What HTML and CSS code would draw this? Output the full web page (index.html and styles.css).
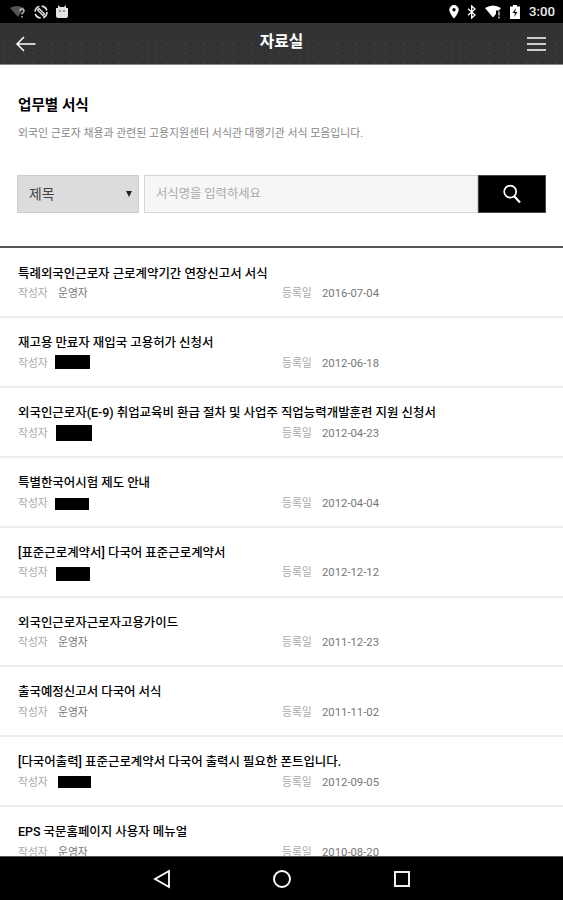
FILE: index.html
```html
<!DOCTYPE html>
<html lang="ko">
<head>
    <meta charset="UTF-8">
    <meta name="viewport" content="width=device-width, initial-scale=1.0">
    <title>자료실</title>
    <link rel="stylesheet" href="styles.css">
</head>
<body>
    <div class="status-bar">
        <div class="status-left">
            <svg width="16" height="14" viewBox="0 0 16 14">
                <path d="M0 3Q7-1 14 3L8 12Z" fill="#555"/>
                <path d="M10 6q0-2 2-2t2 2q0 1-2 2.500v1M12 11v1.500" fill="none" stroke="#bbb" stroke-width="1.500"/>
            </svg>
            <svg width="14" height="14" viewBox="0 0 14 14" fill="none" stroke="#ddd">
                <circle cx="7" cy="7" r="6" stroke-width="1.700" stroke-dasharray="7 2.400"/>
                <path d="M5 3.500L10.500 9 9 10.500 3.500 5z" stroke-width="1.500"/>
            </svg>
            <svg width="12" height="14" viewBox="0 0 12 14">
                <path d="M2 0l2 2h4l2-2v3h2v8q0 2-2 2H2q-2 0-2-2V3h2z" fill="#e4e4e4"/>
                <circle cx="4" cy="6" r=".8" fill="#333"/>
                <circle cx="8" cy="6" r=".8" fill="#333"/>
            </svg>
        </div>
        <div class="status-right">
            <svg width="10" height="14" viewBox="0 0 10 14">
                <path fill="#fff" fill-rule="evenodd" d="M5 0a4.700 4.700 0 0 0-4.700 4.700C.3 8.200 5 13.500 5 13.500s4.700-5.300 4.700-8.800A4.700 4.700 0 0 0 5 0zm0 3a1.700 1.700 0 1 1 0 3.400A1.700 1.700 0 0 1 5 3z"/>
            </svg>
            <svg width="10" height="14" viewBox="0 0 10 14" fill="none" stroke="#fff" stroke-width="1.300">
                <path d="M1 3.800l7 6.200-3.300 3V1L8 4 1 10.200"/>
            </svg>
            <svg width="17" height="14" viewBox="0 0 17 14">
                <path d="M0 3Q8-2 16 3L14 5.500H11V9L8 12.500Z" fill="#fff"/>
                <path d="M14 6.500v4M14 11.500v2" stroke="#ccc" stroke-width="1.500"/>
            </svg>
            <svg width="10" height="14" viewBox="0 0 10 14">
                <path d="M0 1.500h3V0h4v1.500h3V14H0z" fill="#fff"/>
                <path d="M6 3L2.500 8H5l-.8 4L7.500 7H5z" fill="#111"/>
            </svg>
            <span class="time">3:00</span>
        </div>
    </div>

    <header class="header">
        <a class="btn-back">
            <svg width="20" height="16" viewBox="0 0 20 16" fill="none" stroke="#fff" stroke-width="1.500">
                <path d="M19.500 8H1M8 1L1 8l7 7"/>
            </svg>
        </a>
        <h1>자료실</h1>
        <a class="btn-menu"><span></span><span></span><span></span></a>
    </header>

    <section class="search">
        <h2>업무별 서식</h2>
        <p>외국인 근로자 채용과 관련된 고용지원센터 서식관 대행기관 서식 모음입니다.</p>
        <div class="search-form">
            <div class="select"><span>제목</span><i class="arrow"></i></div>
            <input class="keyword" type="text" placeholder="서식명을 입력하세요">
            <button class="btn-search">
                <svg width="18" height="20" viewBox="0 0 18 20" fill="none" stroke="#fff">
                    <circle cx="7.200" cy="7.700" r="6" stroke-width="1.700"/>
                    <path d="M11 12l6 6.500" stroke-width="2.200"/>
                </svg>
            </button>
        </div>
    </section>

    <ul class="list">
        <li>
            <h3>특례외국인근로자 근로계약기간 연장신고서 서식</h3>
            <div class="info"><span class="label">작성자</span><span class="writer">운영자</span><span class="label">등록일</span><span class="date">2016-07-04</span></div>
        </li>
        <li>
            <h3>재고용 만료자 재입국 고용허가 신청서</h3>
            <div class="info"><span class="label">작성자</span><span class="writer"><i class="mask mask1"></i></span><span class="label">등록일</span><span class="date">2012-06-18</span></div>
        </li>
        <li>
            <h3>외국인근로자(E-9) 취업교육비 환급 절차 및 사업주 직업능력개발훈련 지원 신청서</h3>
            <div class="info"><span class="label">작성자</span><span class="writer"><i class="mask mask2"></i></span><span class="label">등록일</span><span class="date">2012-04-23</span></div>
        </li>
        <li>
            <h3>특별한국어시험 제도 안내</h3>
            <div class="info"><span class="label">작성자</span><span class="writer"><i class="mask mask3"></i></span><span class="label">등록일</span><span class="date">2012-04-04</span></div>
        </li>
        <li>
            <h3>[표준근로계약서] 다국어 표준근로계약서</h3>
            <div class="info"><span class="label">작성자</span><span class="writer"><i class="mask mask4"></i></span><span class="label">등록일</span><span class="date">2012-12-12</span></div>
        </li>
        <li>
            <h3>외국인근로자근로자고용가이드</h3>
            <div class="info"><span class="label">작성자</span><span class="writer">운영자</span><span class="label">등록일</span><span class="date">2011-12-23</span></div>
        </li>
        <li>
            <h3>출국예정신고서 다국어 서식</h3>
            <div class="info"><span class="label">작성자</span><span class="writer">운영자</span><span class="label">등록일</span><span class="date">2011-11-02</span></div>
        </li>
        <li>
            <h3>[다국어출력] 표준근로계약서 다국어 출력시 필요한 폰트입니다.</h3>
            <div class="info"><span class="label">작성자</span><span class="writer"><i class="mask mask5"></i></span><span class="label">등록일</span><span class="date">2012-09-05</span></div>
        </li>
        <li>
            <h3>EPS 국문홈페이지 사용자 메뉴얼</h3>
            <div class="info"><span class="label">작성자</span><span class="writer">운영자</span><span class="label">등록일</span><span class="date">2010-08-20</span></div>
        </li>
    </ul>

    <nav class="nav-bar">
        <svg width="18" height="20" viewBox="0 0 18 20" fill="none" stroke="#fff" stroke-width="1.800">
            <path d="M16 2v16L2 10z"/>
        </svg>
        <svg width="20" height="20" viewBox="0 0 20 20" fill="none" stroke="#fff" stroke-width="1.900">
            <circle cx="10" cy="10" r="8"/>
        </svg>
        <svg width="18" height="20" viewBox="0 0 18 20" fill="none" stroke="#eee" stroke-width="2">
            <rect x="2" y="3" width="14" height="14"/>
        </svg>
    </nav>
</body>
</html>
```

FILE: styles.css
```css
* {
    box-sizing: border-box;
    margin: 0;
    padding: 0;
}
body {
    display: flex;
    flex-direction: column;
    height: 900px;
    overflow: hidden;
    background: #fff;
    font-family: Roboto, "Noto Sans CJK KR", sans-serif;
    color: #000;
}
svg {
    display: block;
}
.status-bar {
    display: flex;
    flex: 0 0 23px;
    justify-content: space-between;
    align-items: center;
    padding: 1px 8px 0 10px;
    background: #000;
}
.status-left,
.status-right {
    display: flex;
    align-items: center;
}
.status-left {
    gap: 8px;
}
.status-right {
    gap: 8px;
}
.time {
    margin-left: 1px;
    font-size: 13.2px;
    font-weight: 500;
    line-height: 20px;
    color: #eee;
}
.header {
    display: flex;
    flex: 0 0 42px;
    justify-content: space-between;
    align-items: center;
    padding: 0 17px 0 16px;
    border-bottom: 1px solid #888;
    background-color: #333;
    background-image: linear-gradient(#333 18px, transparent 18px), radial-gradient(circle, #484848 0.8px, transparent 1px);
    background-size: auto, 9.5px 9px;
    background-position: 0 0, 0 17px;
    color: #fff;
}
.header h1 {
    padding-bottom: 3px;
    font-size: 15.8px;
    font-weight: 700;
    line-height: 24px;
}
.btn-menu {
    display: flex;
    flex-direction: column;
    gap: 4px;
    width: 19px;
    padding-top: 1px;
}
.btn-menu span {
    height: 2px;
    background: #ccc;
}
.search {
    flex: 0 0 183px;
    padding: 28px 17px 0;
    border-bottom: 2px solid #555;
}
.search h2 {
    padding-left: 1px;
    font-size: 14.6px;
    font-weight: 700;
    line-height: 24px;
}
.search p {
    padding-left: 1px;
    margin-top: 9px;
    font-size: 10.9px;
    line-height: 16px;
    color: #888;
}
.search-form {
    display: flex;
    height: 38px;
    margin-top: 33px;
}
.select {
    display: flex;
    justify-content: space-between;
    align-items: center;
    width: 122px;
    margin-right: 5px;
    padding: 0 6px 0 11px;
    border: 1px solid #ccc;
    background: #dcdcdc;
    font-size: 13.8px;
    color: #444;
}
.select span {
    padding-bottom: 3px;
}
.arrow {
    border-top: 6px solid #222;
    border-left: 3px solid transparent;
    border-right: 3px solid transparent;
}
.keyword {
    flex: 1;
    min-width: 0;
    padding: 0 11px;
    border: 1px solid #d4d4d4;
    border-radius: 0;
    background: #f6f6f6;
    font-family: inherit;
    font-size: 12.3px;
}
.keyword::placeholder {
    color: #aaa;
}
.btn-search {
    display: flex;
    justify-content: center;
    align-items: center;
    width: 68px;
    border: 1px solid #444;
    background: #000;
}
.list {
    flex: 1;
    min-height: 0;
    padding-top: 0.6px;
    overflow: hidden;
    list-style: none;
}
.list li {
    height: 69.8px;
    padding: 15px 18px 0;
    border-bottom: 2px solid #eee;
}
.list h3 {
    font-size: 12.45px;
    font-weight: 500;
    line-height: 20px;
    white-space: nowrap;
}
.info {
    display: grid;
    grid-template-columns: 40px 224px 40px auto;
    align-items: center;
    height: 20px;
    margin-top: 0.6px;
    font-size: 10.8px;
    line-height: 20px;
    color: #777;
}
.label {
    color: #aaa;
}
.date {
    font-size: 11.3px;
}
.writer {
    display: flex;
    align-items: center;
}
.mask {
    width: 35px;
    height: 14px;
    margin-left: -3px;
    background: #000;
}
.mask1 {
    margin-top: -3px;
}
.mask2 {
    width: 36px;
    height: 16px;
    margin-top: -1px;
    margin-left: -2px;
}
.mask3 {
    width: 34px;
    height: 12px;
}
.mask4 {
    width: 34px;
    margin-top: 1px;
    margin-left: -2px;
}
.mask5 {
    width: 33px;
    height: 12px;
    margin-top: -2px;
    margin-left: 0;
}
.nav-bar {
    display: flex;
    flex: 0 0 44px;
    justify-content: center;
    align-items: center;
    gap: 101px;
    border-top: 1px solid #555;
    background: #000;
}
```
